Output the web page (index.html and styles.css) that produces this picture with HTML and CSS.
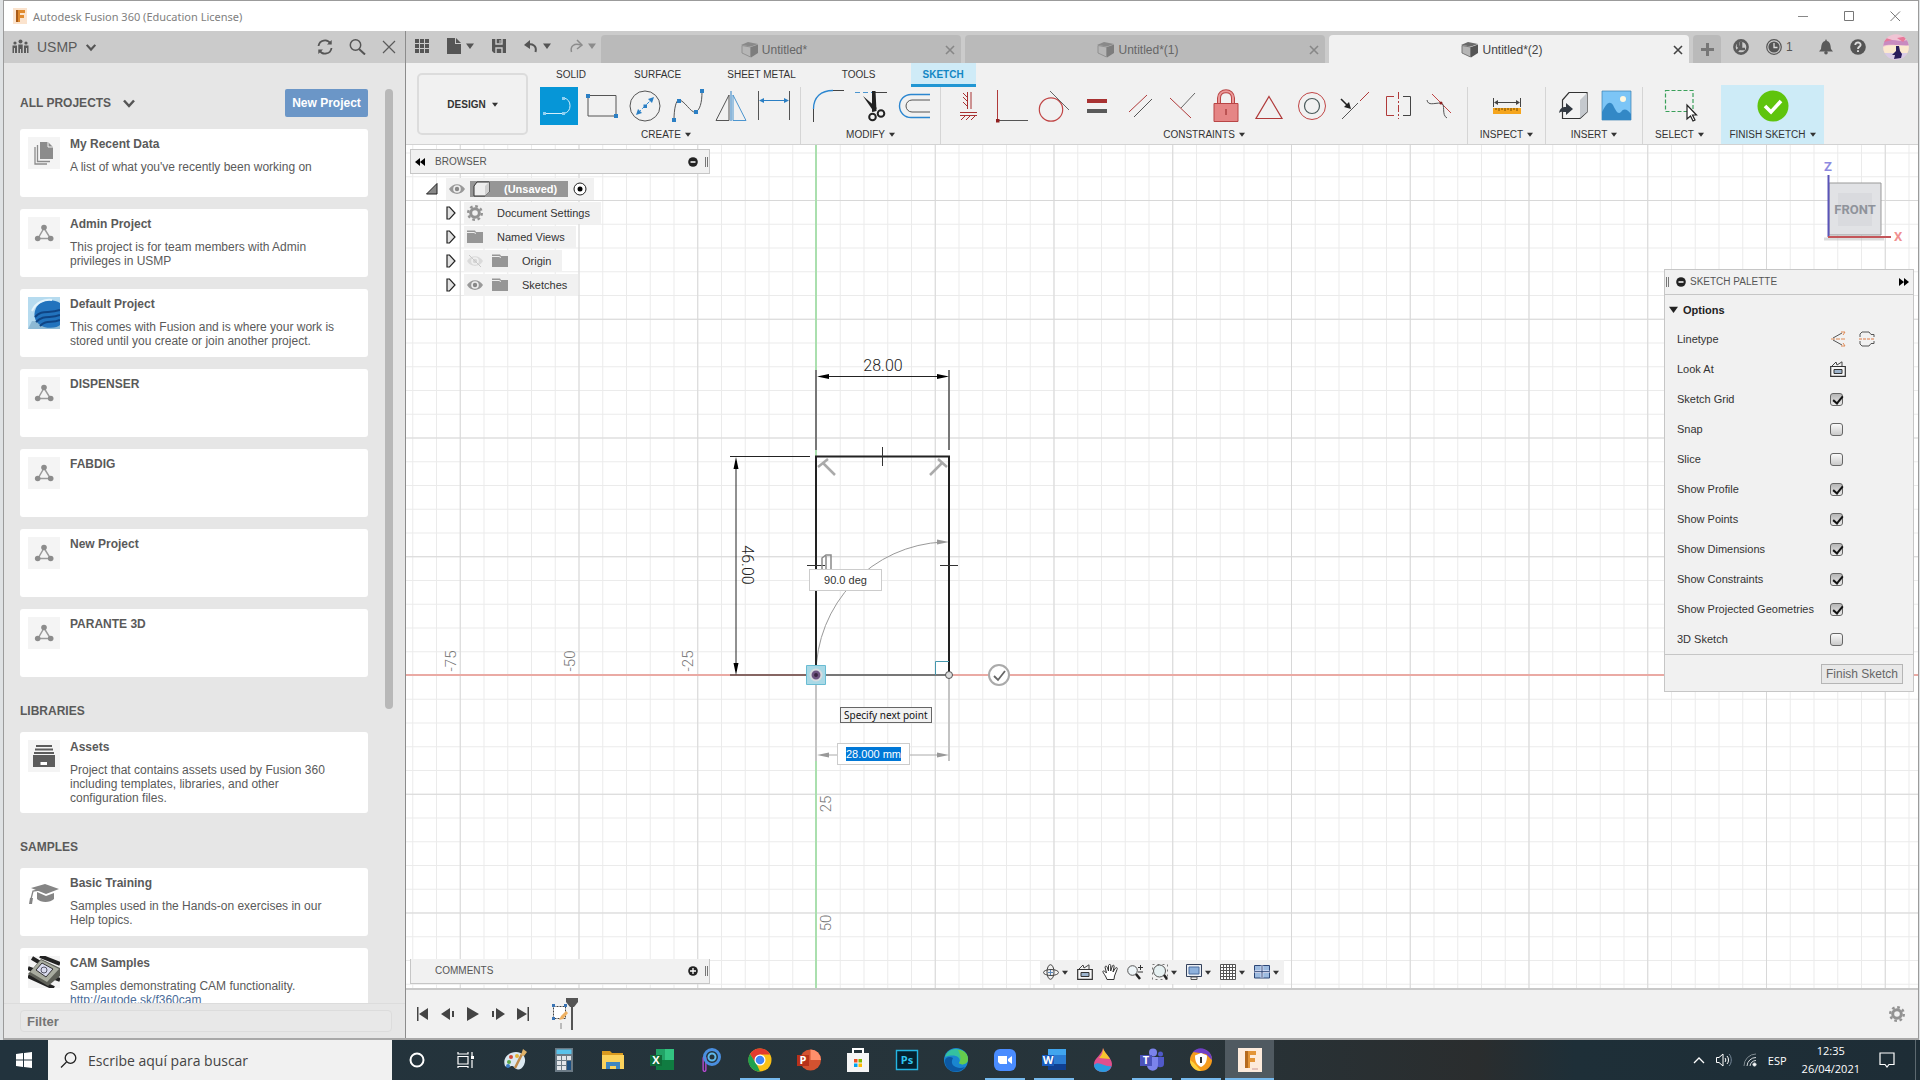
FILE: index.html
```html
<!DOCTYPE html>
<html lang="en">
<head>
<meta charset="utf-8">
<title>Autodesk Fusion 360 (Education License)</title>
<link rel="stylesheet" href="styles.css">
</head>
<body>
<svg class="defs" aria-hidden="true">
  <symbol id="i-project" viewBox="0 0 32 32"><path d="M16 11 10 21.500H22.500Z" fill="none" stroke="#9a9a9a" stroke-width="1.500"/><g fill="#8c8c8c"><circle cx="16" cy="10.500" r="2.800"/><circle cx="9.700" cy="21.500" r="2.800"/><circle cx="22.700" cy="21.500" r="2.800"/></g></symbol>
  <symbol id="i-chev" viewBox="0 0 14 14"><path d="M2 4.500 7 10 12 4.500" fill="none" stroke="#555" stroke-width="2.500"/></symbol>
  <symbol id="i-x" viewBox="0 0 14 14"><path d="M1 1 13 13M13 1 1 13" fill="none" stroke="currentColor" stroke-width="1.200"/></symbol>
  <symbol id="i-xb" viewBox="0 0 10 10"><path d="M1 1 9 9M9 1 1 9" fill="none" stroke="currentColor" stroke-width="1.600"/></symbol>
  <symbol id="i-cube" viewBox="0 0 17 16"><path d="M0 3 7 0 17 2 10 4.500Z" fill="#6a6a6a"/><path d="M1 3.500 9.500 5V15L1 11Z" fill="#b5b5b5" stroke="#777"/><path d="M10 5 17 2.500V11L10 15.500Z" fill="#555"/></symbol>
  <symbol id="i-eye" viewBox="0 0 16 16"><path d="M0 8C4 1.500 12 1.500 16 8 12 14.500 4 14.500 0 8Z" fill="#999"/><circle cx="8" cy="8" r="3.800" fill="#eee"/><circle cx="8" cy="8" r="2.200" fill="#888"/></symbol>
  <symbol id="i-folder" viewBox="0 0 16 16"><path d="M0 1.500H8L9 3H16V14H0Z" fill="#969696"/><path d="M0 3.500H7L9 4.500" stroke="#eee" fill="none"/></symbol>
  <symbol id="i-gear" viewBox="0 0 16 16"><circle cx="8" cy="8" r="4.300" fill="none" stroke="#929292" stroke-width="3"/><circle cx="8" cy="8" r="6.800" fill="none" stroke="#929292" stroke-width="2.400" stroke-dasharray="2.670 2.670"/></symbol>
  <symbol id="i-tri" viewBox="0 0 10 14"><path d="M1 1H3.500L9 7 3.500 13H1Z" fill="#e2e2e2" stroke="#222" stroke-width="1.200"/></symbol>
  <symbol id="i-look" viewBox="0 0 16 16"><path d="M.7 5.500H15.300V15.300H.7Z" fill="#f7f7f7" stroke="#333" stroke-width="1.200"/><path d="M4 8.500H12V12.500H4Z" fill="#9db4cc" stroke="#333"/><path d="M2 5 6 1 7 4 12 .8V5" fill="none" stroke="#444"/></symbol>
  <symbol id="i-caret" viewBox="0 0 8 6"><path d="M0 .5H8L4 6Z" fill="currentColor"/></symbol>
</svg>

<div class="window">
  <header class="titlebar">
    <svg class="app-logo" viewBox="0 0 14 16"><path d="M0 0H14V16H0Z" fill="#fbe3cd"/><path d="M3 2H12V5H7V7H11V10H7V14H3Z" fill="#e08a2e"/><path d="M3 2H5V14H3Z" fill="#a85a17"/></svg>
    <span class="title">Autodesk Fusion 360 (Education License)</span>
    <div class="win-buttons">
      <button aria-label="Minimize"><svg width="11" height="11"><path d="M0 5.500H10" stroke="#888"/></svg></button>
      <button aria-label="Maximize"><svg width="11" height="11"><path d="M.5.5H9.500V9.500H.5Z" fill="none" stroke="#777"/></svg></button>
      <button aria-label="Close"><svg width="11" height="11"><path d="M.5.500 10 10M10 .5.5 10" stroke="#777"/></svg></button>
    </div>
  </header>

  <div class="main">
    <aside class="data-panel">
      <div class="hub">
        <svg width="17" height="16" fill="#5a5a5a"><circle cx="8.500" cy="2.500" r="2"/><circle cx="3" cy="4" r="1.600"/><circle cx="14" cy="4" r="1.600"/><path d="M6.300 5.500H10.700V14H9V10H8V14H6.300ZM.5 6.500H5V14H.5ZM12 6.500H16.500V14H12Z"/><path d="M2.500 9V14M14.500 9V14" stroke="#cbcbcb"/></svg>
        <span class="hub-name">USMP</span>
        <svg width="12" height="12"><use href="#i-chev"/></svg>
        <div class="hub-tools">
          <button aria-label="Refresh"><svg width="16" height="16" fill="none" stroke="#555" stroke-width="1.800"><path d="M1.500 7A6.500 6.500 0 0 1 13.500 4.500M14.500 9A6.500 6.500 0 0 1 2.500 11.500"/><path d="M14.700 1V5.500H10ZM1.300 15V10.500H6Z" fill="#555" stroke="none"/></svg></button>
          <button aria-label="Search"><svg width="17" height="16" fill="none" stroke="#555"><circle cx="6.500" cy="6" r="5.200" stroke-width="1.500"/><path d="M10 10 16 15.500" stroke-width="2"/></svg></button>
          <button aria-label="Close panel"><svg width="14" height="14"><use href="#i-x"/></svg></button>
        </div>
      </div>
      <div class="panel-scroll">
        <div class="projects-head">
          <h2>ALL PROJECTS</h2>
          <svg width="14" height="14"><use href="#i-chev"/></svg>
          <button class="new-project">New Project</button>
        </div>
        <article class="card"><svg class="thumb" viewBox="0 0 32 32"><path d="M12 5H20L25 10V22H12Z" fill="#8c8c8c"/><path d="M20 5V10H25" stroke="#f4f4f4" fill="none"/><path d="M9.500 8V24.500H22M7 10V27H19" fill="none" stroke="#8c8c8c" stroke-width="1.300"/></svg><div><h3>My Recent Data</h3><p>A list of what you've recently been working on</p></div></article>
        <article class="card"><svg class="thumb"><use href="#i-project"/></svg><div><h3>Admin Project</h3><p>This project is for team members with Admin privileges in USMP</p></div></article>
        <article class="card"><svg class="thumb" viewBox="0 0 32 32"><path d="M0 0H32V32H0Z" fill="#b6dbef"/><path d="M0 32 4 24 32 26V32Z" fill="#8db9d4"/><path d="M32 6C24 1 12 3 8 11 4 20 8 27 16 30 24 32 30 30 32 28Z" fill="#2273bd"/><path d="M7 20C14 12 20 17 32 13M8 25C16 17 22 22 32 18M12 29C18 22 24 27 32 23" fill="none" stroke="#0f4484" stroke-width="2"/><path d="M4 14C8 5 17 2 24 3" fill="none" stroke="#e4f4fc" stroke-width="2"/></svg><div><h3>Default Project</h3><p>This comes with Fusion and is where your work is stored until you create or join another project.</p></div></article>
        <article class="card"><svg class="thumb"><use href="#i-project"/></svg><div><h3>DISPENSER</h3></div></article>
        <article class="card"><svg class="thumb"><use href="#i-project"/></svg><div><h3>FABDIG</h3></div></article>
        <article class="card"><svg class="thumb"><use href="#i-project"/></svg><div><h3>New Project</h3></div></article>
        <article class="card"><svg class="thumb"><use href="#i-project"/></svg><div><h3>PARANTE 3D</h3></div></article>
        <h2 class="section">LIBRARIES</h2>
        <article class="card"><svg class="thumb" viewBox="0 0 32 32" fill="#5c5c5c"><path d="M8 5H24V7H8ZM7 8.500H25V10.500H7ZM6 12H26V14H6ZM5 15H27V27H5Z"/><path d="M12.500 22H19V25H12.500Z" fill="#fff"/></svg><div><h3>Assets</h3><p>Project that contains assets used by Fusion 360 including templates, libraries, and other configuration files.</p></div></article>
        <h2 class="section">SAMPLES</h2>
        <article class="card"><svg class="thumb plain" viewBox="0 0 32 32" fill="#858585"><path d="M3 12 17 8 31 13 18 18Z"/><path d="M9 16 18 20 26 17V23C22 27 13 27 9 23Z"/><path d="M17 13 5 15 3 23" fill="none" stroke="#858585" stroke-width="1.300"/><path d="M2 22H5L4 28H1Z"/></svg><div><h3>Basic Training</h3><p>Samples used in the Hands-on exercises in our Help topics.</p></div></article>
        <article class="card"><svg class="thumb" viewBox="0 0 32 32"><path d="M0 12 32 24M0 20 26 32M12 0 32 8M4 2 14 8" stroke="#222" stroke-width="4"/><path d="M0 18 13 3 32 12V20L20 30Z" fill="#5e6058"/><path d="M2 16 13 4 31 13 19 26Z" fill="#a9aca0"/><path d="M8 14 14 7 25 13 18 21Z" fill="#d9dbee" stroke="#333"/><circle cx="16" cy="14" r="3" fill="none" stroke="#556"/></svg><div><h3>CAM Samples</h3><p>Samples demonstrating CAM functionality. <a href="#cam">http://autode.sk/f360cam</a></p></div></article>
        <span class="scroll-thumb"></span>
      </div>
      <div class="filter"><input type="text" placeholder="Filter" aria-label="Filter"></div>
    </aside>

    <section class="workspace">
      <div class="tabbar">
        <div class="quick">
          <button aria-label="Data panel"><svg width="14" height="14" fill="#555"><path d="M0 0H4V4H0ZM5 0H9V4H5ZM10 0H14V4H10ZM0 5H4V9H0ZM5 5H9V9H5ZM10 5H14V9H10ZM0 10H4V14H0ZM5 10H9V14H5ZM10 10H14V14H10Z"/></svg></button>
          <button aria-label="File"><svg width="14" height="16"><path d="M0 0H8V6H14V16H0Z" fill="#555"/><path d="M9 0 14 5H9Z" fill="#555"/></svg><svg class="caret"><use href="#i-caret"/></svg></button>
          <button aria-label="Save"><svg width="14" height="14"><path d="M0 0H14V14H2L0 12Z" fill="#555"/><path d="M4 0V5H10V0M4 14V9H10V14" fill="none" stroke="#ccc" stroke-width="1.400"/><path d="M8 1V4" stroke="#ccc"/></svg></button>
          <button aria-label="Undo"><svg width="14" height="14"><path d="M2 6C9 4 13 7 11.500 13" fill="none" stroke="#555" stroke-width="2"/><path d="M0 6 6 1V10Z" fill="#555"/></svg><svg class="caret"><use href="#i-caret"/></svg></button>
          <button aria-label="Redo" class="off"><svg width="14" height="14"><path d="M12 6C5 4 1 7 2.500 13" fill="none" stroke="#8c8c8c" stroke-width="1.500"/><path d="M8 1 13 6 8 10" fill="none" stroke="#8c8c8c" stroke-width="1.500"/></svg><svg class="caret"><use href="#i-caret"/></svg></button>
        </div>
        <div class="doc-tab dim"><span class="doc-name"><svg width="17" height="16"><use href="#i-cube"/></svg>Untitled*</span><button aria-label="Close tab"><svg width="10" height="10"><use href="#i-xb"/></svg></button></div>
        <div class="doc-tab dim"><span class="doc-name"><svg width="17" height="16"><use href="#i-cube"/></svg>Untitled*(1)</span><button aria-label="Close tab"><svg width="10" height="10"><use href="#i-xb"/></svg></button></div>
        <div class="doc-tab active"><span class="doc-name"><svg width="17" height="16"><use href="#i-cube"/></svg>Untitled*(2)</span><button aria-label="Close tab"><svg width="10" height="10"><use href="#i-xb"/></svg></button></div>
        <button class="add-tab" aria-label="New tab"><svg width="13" height="13"><path d="M6.500 0V13M0 6.500H13" stroke="#777" stroke-width="3"/></svg></button>
        <div class="status">
          <button aria-label="Extensions"><svg width="16" height="16" fill="none"><circle cx="8" cy="8" r="6.600" stroke="#5c5c5c" stroke-width="2.600"/><path d="M5 3V7L8 10H12M3 13 8 8 8 3" stroke="#5c5c5c" stroke-width="2.600"/></svg></button>
          <button aria-label="Job status"><svg width="16" height="16"><circle cx="8" cy="8" r="7.300" fill="none" stroke="#555" stroke-width="1.200"/><circle cx="8" cy="8" r="5.600" fill="#555"/><path d="M8 4V8.500H11.500" fill="none" stroke="#ddd" stroke-width="1.300"/></svg><span>1</span></button>
          <button class="bell" aria-label="Notifications"><svg width="14" height="16" fill="#5a5a5a"><path d="M7 0 8 2C12 3 11.500 8 12 10L14 12.500H0L2 10C2.500 8 2 3 6 2Z"/><circle cx="7" cy="13.700" r="1.800"/></svg></button>
          <button aria-label="Help"><svg width="16" height="16"><circle cx="8" cy="8" r="7.800" fill="#555"/><path d="M5.300 6C5.300 2.500 10.800 2.700 10.600 6 10.500 7.800 8 7.500 8 10M8 11.300V13" fill="none" stroke="#ddd" stroke-width="1.900"/></svg></button>
          <button aria-label="Account"><svg width="26" height="26" viewBox="0 0 26 26"><clipPath id="av"><circle cx="13" cy="13" r="12.800"/></clipPath><g clip-path="url(#av)"><path d="M0 0H26V26H0Z" fill="#f0c4d4"/><path d="M0 7C8 3 18 10 26 5V11C18 13 8 9 0 12Z" fill="#c98bc0"/><path d="M0 3 9 6 1 8ZM14 4 25 2 20 8Z" fill="#e8799a"/><path d="M0 13C8 10 18 12 26 12V19H0Z" fill="#fbe9cf"/><path d="M0 19H26V26H0Z" fill="#d8cbe6"/><path d="M13 12 16 12 17 17 19 20 18 24 11 25 12 21 9 21 13 17Z" fill="#2a1c5c"/></g></svg></button>
        </div>
      </div>

      <div class="ribbon">
        <button class="design">DESIGN<svg class="caret"><use href="#i-caret"/></svg></button>
        <div class="ribbon-body">
          <nav class="ribbon-tabs"><a href="#solid">SOLID</a><a href="#surface">SURFACE</a><a href="#sheet">SHEET METAL</a><a href="#tools">TOOLS</a><a href="#sketch" class="current">SKETCH</a></nav>
          <div class="groups">
            <div class="group">
              <div class="tools">
                <button class="on" aria-label="Line"><svg viewBox="0 0 38 38"><path d="M4 26.500H24M24 11A8 8 0 0 1 24 26.500" fill="none" stroke="#d5eefa"/><g fill="#8fd0f2"><path d="M3 25H6V28H3ZM22 25H25V28H22ZM22 10H25V13H22Z"/></g></svg></button>
                <button aria-label="Rectangle"><svg viewBox="0 0 38 38"><path d="M5 8.500H33V29H5Z" fill="none" stroke="#555"/><path d="M3 7H7V11H3ZM31 27H35V31H31Z" fill="#2b7fc4"/></svg></button>
                <button aria-label="Circle"><svg viewBox="0 0 38 38"><circle cx="19" cy="19" r="15" fill="none" stroke="#555"/><path d="M12 26 26 12" stroke="#2b86d0" stroke-dasharray="4 2"/><path d="M10 28 12 22 16 26ZM28 10 22 12 26 16ZM17.500 17.500H21V21H17.500Z" fill="#2b7fc4"/></svg></button>
                <button aria-label="Spline"><svg viewBox="0 0 38 38"><path d="M5 33C5 22 7 13 10 13 15 13 22 26 26 25 31 24 33 15 33 5" fill="none" stroke="#555"/><path d="M3 31H7V35H3ZM8 12H12V16H8ZM25 23H29V27H25ZM31 2H35V6H31Z" fill="#2b7fc4"/></svg></button>
                <button aria-label="Mirror"><svg viewBox="0 0 38 38"><path d="M17 8V33.500H4Z" fill="none" stroke="#555"/><path d="M21 8V33.500H34Z" fill="none" stroke="#4b95cf"/><path d="M19 4V34" stroke="#2b7fc4"/></svg></button>
                <button aria-label="Dimension"><svg viewBox="0 0 38 38"><path d="M3.500 4V33M34.500 4V33" stroke="#555"/><path d="M5 13.500H33" stroke="#2b7fc4"/><path d="M4 13.500 9 11V16ZM34 13.500 29 11V16Z" fill="#2b7fc4"/></svg></button>
              </div>
              <button class="group-label">CREATE<svg class="caret"><use href="#i-caret"/></svg></button>
            </div>
            <div class="group">
              <div class="tools">
                <button aria-label="Fillet"><svg viewBox="0 0 38 38" fill="none"><path d="M4.500 22V35M24 3.500H35" stroke="#444"/><path d="M4.500 22C4.500 10 12 3.500 24 3.500" stroke="#2b86d0" stroke-width="1.300"/></svg></button>
                <button aria-label="Trim"><svg viewBox="0 0 38 38"><path d="M3 5.500H20" stroke="#4b95cf" stroke-dasharray="5 3"/><path d="M22 5.500H35" stroke="#444"/><path d="M20 4H23.500L24.500 24 20 25ZM11 9 25 21 22 25Z" fill="#222"/><g fill="none" stroke="#222" stroke-width="2"><circle cx="20.500" cy="30" r="3.300"/><circle cx="29" cy="26.500" r="3.300"/></g></svg></button>
                <button aria-label="Offset"><svg viewBox="0 0 38 38" fill="none"><path d="M35 7.500H16A11.500 11.500 0 0 0 16 30.500H35" stroke="#2b86d0" stroke-width="1.400"/><path d="M35 13H17A6 6 0 0 0 17 25H35" stroke="#555"/></svg></button>
              </div>
              <button class="group-label">MODIFY<svg class="caret"><use href="#i-caret"/></svg></button>
            </div>
            <div class="group">
              <div class="tools">
                <button aria-label="Horizontal/Vertical"><svg viewBox="0 0 38 38" fill="none" stroke="#a83232"><path d="M18.500 5V22M11 25.500H28M14 6 18 10M14 10 18 14M14 15 18 19"/><path d="M22 5V22M11 28.500H28M16 29 12 33M21 29 17 33M26 29 22 33"/></svg></button>
                <button aria-label="Coincident"><svg viewBox="0 0 38 38"><path d="M5.500 3V33" stroke="#b03a3a"/><path d="M6 33.500H36" stroke="#555"/><path d="M4 32H7.500V35.500H4Z" fill="#902020"/></svg></button>
                <button aria-label="Tangent"><svg viewBox="0 0 38 38" fill="none"><circle cx="16" cy="22.500" r="11.700" stroke="#c04545" stroke-width="1.200"/><path d="M15 4 34 23" stroke="#666"/></svg></button>
                <button aria-label="Equal"><svg viewBox="0 0 38 38"><path d="M9 12H29V16H9Z" fill="#a83232"/><path d="M9 22H29V26H9Z" fill="#5a5a5a"/></svg></button>
                <button aria-label="Parallel"><svg viewBox="0 0 38 38"><path d="M8 25 26 8" stroke="#b03a3a"/><path d="M13 30 31 12" stroke="#555"/></svg></button>
                <button aria-label="Perpendicular"><svg viewBox="0 0 38 38"><path d="M6 11 27 31" stroke="#b03a3a"/><path d="M17 21 31 6" stroke="#666"/></svg></button>
                <button aria-label="Fix"><svg viewBox="0 0 38 38"><path d="M12 17V11C12 2 26 2 26 11V17" fill="none" stroke="#b84545" stroke-width="4"/><path d="M12 17V11C12 2 26 2 26 11V17" fill="none" stroke="#ec9a9a" stroke-width="2"/><path d="M7 16.500H31V34.500H7Z" fill="#e58585" stroke="#b84545"/><path d="M19 22V28" stroke="#902020"/></svg></button>
                <button aria-label="Midpoint"><svg viewBox="0 0 38 38"><path d="M19 9.500 32 31.500H6Z" fill="none" stroke="#b03a3a" stroke-width="1.200"/></svg></button>
                <button aria-label="Concentric"><svg viewBox="0 0 38 38" fill="none"><circle cx="19" cy="19" r="13.500" stroke="#c04545"/><circle cx="19" cy="19" r="7.500" stroke="#4a5a5a" stroke-width="1.200"/></svg></button>
                <button aria-label="Collinear"><svg viewBox="0 0 38 38"><path d="M6 32 22 16" stroke="#555"/><path d="M24 14 33 5" stroke="#b03a3a"/><path d="M5 12 13 20" stroke="#222" stroke-width="1.600"/><path d="M15 22 8 20 13 15Z" fill="#222"/></svg></button>
                <button aria-label="Symmetry"><svg viewBox="0 0 38 38" fill="none"><path d="M15 9.500H7.500V28.500H15" stroke="#b03a3a"/><path d="M19.500 5V32" stroke="#b03a3a" stroke-dasharray="7 2 2 2"/><path d="M24 9.500H31.500V28.500H24" stroke="#444"/></svg></button>
                <button aria-label="Curvature"><svg viewBox="0 0 38 38" fill="none"><path d="M10 7 29 26" stroke="#c04545"/><path d="M5 13C6 19 12 16 19 16 24 17 19 28 25 31" stroke="#555"/><circle cx="19" cy="16" r="1.500" fill="#902020"/></svg></button>
              </div>
              <button class="group-label">CONSTRAINTS<svg class="caret"><use href="#i-caret"/></svg></button>
            </div>
            <div class="group">
              <div class="tools wide">
                <button aria-label="Measure"><svg viewBox="0 0 38 38"><path d="M5.500 11V20M32.500 11V20M7 15.500H31" stroke="#444"/><path d="M6 15.500 10 13V18ZM32 15.500 28 13V18Z" fill="#444"/><path d="M5 21H33V27H5Z" fill="#f5a51d"/><path d="M8 21V23M11 21V24M14 21V23M17 21V24M20 21V23M23 21V24M26 21V23M29 21V24" stroke="#754a00"/></svg></button>
              </div>
              <button class="group-label">INSPECT<svg class="caret"><use href="#i-caret"/></svg></button>
            </div>
            <div class="group">
              <div class="tools">
                <button aria-label="Insert derive"><svg viewBox="0 0 38 38"><path d="M8.500 13 15 5.500H33V25L26 31.500H8.500Z" fill="#f3f3f3" stroke="#333" stroke-width="1.200"/><path d="M26 31 26 13 33 6V25Z" fill="#c5c9ce"/><path d="M5 26C6 20 10 20 12 20V16L19 22 12 28V25C9 25 7 24 5 26Z" fill="#333a42"/></svg></button>
                <button aria-label="Insert canvas"><svg viewBox="0 0 38 38"><path d="M5 4H34V33H5Z" fill="#7cc5f6" stroke="#3a7eb0" stroke-width=".7"/><circle cx="26" cy="12" r="3" fill="#fff8e0"/><path d="M5 25C8 19 12 12 16 18 19 24 21 28 24 25 27 20 31 23 34 27V33H5Z" fill="#3388c6"/></svg></button>
              </div>
              <button class="group-label">INSERT<svg class="caret"><use href="#i-caret"/></svg></button>
            </div>
            <div class="group last">
              <div class="tools wide">
                <button aria-label="Select"><svg viewBox="0 0 38 38"><path d="M4.500 3.500H32V24.500H4.500Z" fill="none" stroke="#3aa05a" stroke-width="1.200" stroke-dasharray="4 2"/><path d="M26 18V32L29.500 29 32 34 34 33 31.500 28H35.500Z" fill="#fff" stroke="#222" stroke-width="1.200"/></svg></button>
              </div>
              <button class="group-label">SELECT<svg class="caret"><use href="#i-caret"/></svg></button>
            </div>
            <div class="group finish">
              <div class="tools wide">
                <button aria-label="Finish"><svg viewBox="0 0 38 38"><circle cx="19" cy="19" r="15.500" fill="#5fc40d"/><path d="M11 19 17 25 27 14" fill="none" stroke="#fff" stroke-width="3.600"/></svg></button>
              </div>
              <button class="group-label">FINISH SKETCH<svg class="caret"><use href="#i-caret"/></svg></button>
            </div>
          </div>
        </div>
      </div>

      <div class="canvas">
        <svg class="drawing" width="100%" height="100%">
          <defs>
            <pattern id="minor" width="5" height="5" patternUnits="userSpaceOnUse" patternTransform="translate(410 530) scale(4.750)"><path d="M0 0H5M0 0V5" stroke="#ebebeb" stroke-width=".42"/></pattern>
            <pattern id="major" width="25" height="25" patternUnits="userSpaceOnUse" patternTransform="translate(410 530) scale(4.750)"><path d="M0 0H25M0 0V25" stroke="#d8d8d8" stroke-width=".42"/></pattern>
          </defs>
          <rect width="100%" height="100%" fill="url(#minor)"/>
          <rect width="100%" height="100%" fill="url(#major)"/>
          <path d="M410 0V2000" stroke="#aadfae" stroke-width="2"/>
          <path d="M0 530H4000" stroke="#eaaaa4" stroke-width="2"/>
          <g class="ruler-text" text-anchor="middle">
            <text transform="translate(50 516) rotate(-90)">-75</text>
            <text transform="translate(169 516) rotate(-90)">-50</text>
            <text transform="translate(287 516) rotate(-90)">-25</text>
            <text transform="translate(425 659) rotate(-90)">25</text>
            <text transform="translate(425 778) rotate(-90)">50</text>
          </g>
          <path d="M410 532V616M543 532V616" stroke="#c4c4c4" stroke-width="2"/>
          <path d="M422 610H531" stroke="#aaa"/>
          <path d="M411 610 423 607.500V612.500ZM543 610 531 607.500V612.500Z" fill="#999"/>
          <path d="M410 530A133 133 0 0 1 537 397" fill="none" stroke="#999"/>
          <path d="M543 397 531 394.500V399.500Z" fill="#999"/>
          <path d="M324 311.500H404M324 530H404" stroke="#222"/>
          <path d="M404 530H543" stroke="#777" stroke-width="2"/>
          <path d="M410 225V305M543 225V305" stroke="#777" stroke-width="2"/>
          <path d="M416 231.500H538M330 316V526" stroke="#222"/>
          <path d="M411 231.500 423 229V234ZM543 231.500 531 229V234ZM330 312 327.500 324H332.500ZM330 530 327.500 518H332.500Z"/>
          <path d="M410 530V311.500H543V530" fill="none" stroke="#222" stroke-width="2"/>
          <path d="M476.500 302V321M401 420.500H419M534 420.500H552" stroke="#333"/>
          <g stroke="#aaa" stroke-width="2.500"><path d="M412 322 422 314M417 318 429 330M532 314 541 322M536 318 524 330"/></g>
          <path d="M416 424V413L420 410H425V424M420 411V424" fill="none" stroke="#8a8a8a" stroke-width="1.500"/>
          <path d="M529.500 530V516.500H543" fill="none" stroke="#4597ad"/>
          <path d="M400.500 520.500H419.500V539.500H400.500Z" fill="#a9d9e6" stroke="#69bcd3"/>
          <circle cx="410" cy="530" r="6.500" fill="#d6dcdf"/><circle cx="410" cy="530" r="3.200" fill="#3a2640" stroke="#6f5580" stroke-width="2.500"/>
          <circle cx="543" cy="530" r="3.500" fill="#ddd" stroke="#555"/>
          <circle cx="593" cy="530" r="10" fill="#fff" stroke="#aaa" stroke-width="2"/><path d="M588 531 592 535 599 526" fill="none" stroke="#666" stroke-width="1.800"/>
          <text class="dim-text" x="477" y="226" text-anchor="middle">28.00</text>
          <text class="dim-text" text-anchor="middle" transform="translate(336 420) rotate(90)">46.00</text>
        </svg>
        <input class="field angle" aria-label="Angle" value="90.0 deg">
        <span class="hint">Specify next point</span>
        <label class="field length"><mark>28.000 mm</mark></label>

        <section class="browser">
          <header class="palette-bar"><svg width="10" height="8"><path d="M5 0V8L0 4ZM10 0V8L5 4Z"/></svg><h2>BROWSER</h2><button aria-label="Collapse"><svg width="10" height="10"><circle cx="5" cy="5" r="4.800" fill="#222"/><path d="M2.500 5H7.500" stroke="#fff" stroke-width="1.500"/></svg></button><i class="grip"></i></header>
          <ul class="tree">
            <li class="root"><svg width="12" height="12"><path d="M.5 11H11V.5Z" fill="#888" stroke="#222"/></svg><span class="node"><svg width="16" height="16"><use href="#i-eye"/></svg><b class="selected"><svg width="17" height="16"><path d="M1 5 4 1H16V11L12 15H1Z" fill="#eee" stroke="#333"/><path d="M12 15V5L16 1V11Z" fill="#d0d0d0"/></svg>(Unsaved)</b><svg width="14" height="14"><circle cx="7" cy="7" r="6" fill="#fff" stroke="#222"/><circle cx="7" cy="7" r="2.500"/></svg></span></li>
            <li><svg width="10" height="14"><use href="#i-tri"/></svg><span class="node"><svg width="16" height="16"><use href="#i-gear"/></svg><em>Document Settings</em></span></li>
            <li><svg width="10" height="14"><use href="#i-tri"/></svg><span class="node"><svg width="16" height="16"><use href="#i-folder"/></svg><em>Named Views</em></span></li>
            <li><svg width="10" height="14"><use href="#i-tri"/></svg><span class="node"><svg width="16" height="16"><g opacity=".25"><use href="#i-eye"/></g><path d="M2 2 14 14" stroke="#c8c8c8"/></svg><svg width="16" height="16"><use href="#i-folder"/></svg><em>Origin</em></span></li>
            <li><svg width="10" height="14"><use href="#i-tri"/></svg><span class="node"><svg width="16" height="16"><use href="#i-eye"/></svg><svg width="16" height="16"><use href="#i-folder"/></svg><em>Sketches</em></span></li>
          </ul>
        </section>

        <div class="viewcube">
          <svg width="90" height="90"><path d="M11 17H63V69H11Z" fill="#e1e2e5" stroke="#999"/><path d="M20 27H54V60H20Z" fill="#d9dade"/><path d="M6 73H66" stroke="#bbb" stroke-width="3" opacity=".5"/><path d="M10.500 9V71" stroke="#5a54b8" stroke-width="2"/><path d="M10 71H73" stroke="#c4565a" stroke-width="2"/><text class="axis z" x="6" y="5">Z</text><text class="axis x" x="76" y="75">X</text><text class="face" x="37" y="48" text-anchor="middle">FRONT</text></svg>
        </div>

        <section class="palette">
          <header class="palette-bar"><i class="grip"></i><button aria-label="Collapse"><svg width="10" height="10"><circle cx="5" cy="5" r="4.800" fill="#222"/><path d="M2.500 5H7.500" stroke="#fff" stroke-width="1.500"/></svg></button><h2>SKETCH PALETTE</h2><svg width="10" height="8"><path d="M0 0V8L5 4ZM5 0V8L10 4Z"/></svg></header>
          <h3><svg class="caret"><use href="#i-caret"/></svg>Options</h3>
          <div class="option"><span>Linetype</span><div class="pair">
            <button aria-label="Construction"><svg width="16" height="16" fill="none"><path d="M1 8H16" stroke="#e08a55" stroke-dasharray="4 1"/><path d="M3 7 12 2M3 9 12 14" stroke="#555"/><path d="M11 1 15 1 13 4M11 15 15 15 13 12" stroke="#e08a55"/></svg></button>
            <button aria-label="Centerline"><svg width="16" height="16" fill="none"><path d="M1 6V3L3 1H10L12 3.500H15V6M1 10V13L3 15H10L12 12.500H15V10" stroke="#555"/><path d="M0 8H16" stroke="#e07a45" stroke-dasharray="3 1"/></svg></button></div></div>
          <div class="option"><span>Look At</span><button aria-label="Look At"><svg width="16" height="16"><use href="#i-look"/></svg></button></div>
          <label class="option"><span>Sketch Grid</span><input type="checkbox" checked></label>
          <label class="option"><span>Snap</span><input type="checkbox"></label>
          <label class="option"><span>Slice</span><input type="checkbox"></label>
          <label class="option"><span>Show Profile</span><input type="checkbox" checked></label>
          <label class="option"><span>Show Points</span><input type="checkbox" checked></label>
          <label class="option"><span>Show Dimensions</span><input type="checkbox" checked></label>
          <label class="option"><span>Show Constraints</span><input type="checkbox" checked></label>
          <label class="option"><span>Show Projected Geometries</span><input type="checkbox" checked></label>
          <label class="option"><span>3D Sketch</span><input type="checkbox"></label>
          <footer><button>Finish Sketch</button></footer>
        </section>

        <section class="comments palette-bar"><h2>COMMENTS</h2><button aria-label="Expand"><svg width="10" height="10"><circle cx="5" cy="5" r="4.800" fill="#222"/><path d="M2 5H8M5 2V8" stroke="#fff" stroke-width="1.300"/></svg></button><i class="grip"></i></section>

        <div class="navbar">
          <button aria-label="Orbit"><svg width="16" height="16" fill="none" stroke="#444"><ellipse cx="7.500" cy="8" rx="3.500" ry="7.300"/><ellipse cx="8" cy="8.500" rx="7.500" ry="3"/><path d="M7.500 6V11M5 8.500H10" stroke="#5b86b8"/></svg><svg class="caret"><use href="#i-caret"/></svg></button>
          <button aria-label="Look At"><svg width="16" height="16"><use href="#i-look"/></svg></button>
          <button aria-label="Pan"><svg width="16" height="16"><path d="M5 15.500C4 12 1 9 .8 7.500 1.500 6 3.500 8 4.500 9L3 3C3.500 1.500 5 2 5.500 4L6.500 7V1.500C7 0 8.500 0 8.700 1.500V7L10.500 1.700C11.500.7 12.700 1.500 12 3L11 8 13.500 4C15 3 15.700 4 15 5.500L12.500 12 12 15.500Z" fill="#fff" stroke="#333"/></svg></button>
          <button aria-label="Zoom"><svg width="16" height="16" fill="none"><circle cx="5.500" cy="6.500" r="4.800" stroke="#555" fill="#eef5f8"/><path d="M9 10 13 15" stroke="#222" stroke-width="2.500"/><path d="M11 3.500H16M13.500 1V6M11 8H16" stroke="#333"/></svg></button>
          <button aria-label="Zoom window"><svg width="16" height="16" fill="none"><path d="M.5.5H15.500V15.500H.5Z" stroke="#777" stroke-dasharray="2 3"/><circle cx="7.500" cy="7" r="6" stroke="#555" fill="#e6f1f2"/><path d="M12 11 15 15" stroke="#222" stroke-width="2.500"/></svg><svg class="caret"><use href="#i-caret"/></svg></button>
          <button aria-label="Display settings"><svg width="16" height="16"><path d="M.5.5H15.500V12.500H.5Z" fill="#e9eef4" stroke="#33405a"/><path d="M3 3H13V10H3Z" fill="#8db1dc" stroke="#4c6ea0"/><path d="M5 13H11V15.500H5Z" fill="#eee" stroke="#555"/></svg><svg class="caret"><use href="#i-caret"/></svg></button>
          <button aria-label="Grid"><svg width="16" height="16"><path d="M.5.500H15.500V15.500H.5ZM.5 3.500H15.500M.5 6.500H15.500M.5 9.500H15.500M.5 12.500H15.500M3.500.5V15.500M6.500.5V15.500M9.500.5V15.500M12.500.5V15.500" fill="#fff" stroke="#555"/></svg><svg class="caret"><use href="#i-caret"/></svg></button>
          <button aria-label="Viewports"><svg width="16" height="14"><path d="M.5.5H15.500V13H.5Z" fill="#9dbbe0" stroke="#2c4676"/><path d="M8 .5V13M.5 6.700H15.500" stroke="#eef" stroke-width="2.500"/><path d="M8 .5V13M.5 6.700H15.500" stroke="#2c4676"/></svg><svg class="caret"><use href="#i-caret"/></svg></button>
        </div>
      </div>

      <footer class="timeline">
        <button aria-label="Start"><svg width="14" height="14" fill="#444"><path d="M1 0H2.500V14H1ZM12 1V13L3 7Z"/></svg></button>
        <button aria-label="Step back"><svg width="14" height="14" fill="#444"><path d="M9 1V13L0 7ZM11 4H13V10H11Z"/></svg></button>
        <button aria-label="Play"><svg width="14" height="14" fill="#444"><path d="M1 0 13 7 1 14Z"/></svg></button>
        <button aria-label="Step forward"><svg width="14" height="14" fill="#444"><path d="M5 1V13L14 7ZM1 4H3V10H1Z"/></svg></button>
        <button aria-label="End"><svg width="14" height="14" fill="#444"><path d="M11.500 0H13V14H11.500ZM1 1V13L11 7Z"/></svg></button>
        <svg class="marker" width="28" height="34"><path d="M3.500 9.500H15.500V21.500H3.500Z" fill="#fff" stroke="#444" stroke-dasharray="2 1"/><path d="M2 7H5V10H2ZM14 7H17V10H14ZM2 20H5V23H2Z" fill="#3a74b5"/><path d="M9 23 11 19 16 14 18 16 13 22Z" fill="#eeb062"/><path d="M11 26V32" stroke="#bbb" stroke-width="2"/><path d="M16 1H28V5L24 10H20L16 5Z" fill="#555"/><path d="M22 8V33" stroke="#555" stroke-width="2"/></svg>
        <button class="gear" aria-label="Settings"><svg width="16" height="16"><use href="#i-gear"/></svg></button>
      </footer>
    </section>
  </div>
</div>

<footer class="taskbar">
  <button class="start" aria-label="Start"><svg width="16" height="16" fill="#fff"><path d="M0 2 7 1V7.500H0ZM8 1 16 0V7.500H8ZM0 8.500H7V15L0 14ZM8 8.500H16V16L8 15Z"/></svg></button>
  <label class="search"><svg width="17" height="16" fill="none" stroke="#222" stroke-width="1.300"><circle cx="10.500" cy="6" r="5.300"/><path d="M6.500 10 1 15.500"/></svg><input type="text" placeholder="Escribe aquí para buscar" aria-label="Escribe aquí para buscar"></label>
  <nav class="apps">
    <button aria-label="Cortana"><svg viewBox="0 0 24 24"><circle cx="12" cy="12" r="6.500" fill="none" stroke="#fff" stroke-width="2"/></svg></button>
    <button aria-label="Task view"><svg viewBox="0 0 24 24" fill="none" stroke="#fff" stroke-width="1.200"><path d="M4 8.500H14V16H4ZM4 4V6H14V4M4 20V18.500H14V20M18 4V8M18 12V20"/><path d="M17 8H20V11H17Z" fill="#fff" stroke="none"/></svg></button>
    <button aria-label="Paint"><svg viewBox="0 0 24 24"><path d="M2 18C-1 10 6 4 13 4 21 4 24 11 21 17 18 23 13 22 11 19 9 16 5 21 2 18Z" fill="#dbe8f0"/><circle cx="6" cy="14" r="2" fill="#5aa54a"/><circle cx="8" cy="9" r="2" fill="#d04a3a"/><circle cx="14" cy="8" r="2" fill="#e2b53a"/><circle cx="5" cy="18" r="2" fill="#3a7ac0"/><path d="M12 20 19 6" stroke="#c08a4a" stroke-width="2.500"/><path d="M18 7 20 1 24 4 21 8Z" fill="#e0b268"/></svg></button>
    <button aria-label="Calculator"><svg viewBox="0 0 24 24"><path d="M3 0H21V24H3Z" fill="#6b7a85"/><path d="M4.500 1.500H19.500V6H4.500Z" fill="#59c2ea"/><path d="M5 8H9V12H5ZM10 8H14V12H10ZM15 8H19V12H15ZM5 13H9V17H5ZM10 13H14V17H10ZM5 18H9V22H5ZM10 18H14V22H10Z" fill="#e2e6ea"/><path d="M15 13H19V22H15Z" fill="#1d4f80"/></svg></button>
    <button aria-label="Explorer"><svg viewBox="0 0 24 24"><path d="M1 3H9L11 5H22V8H1Z" fill="#d99a1f"/><path d="M1 7H23V21H1Z" fill="#fbd25c"/><path d="M5 21V14H19V21H15V18H9V21Z" fill="#3f86c0"/></svg></button>
    <button aria-label="Excel"><svg viewBox="0 0 24 24"><path d="M6 1H24V22H6Z" fill="#21a366"/><path d="M15 1H24V12H15Z" fill="#33c481"/><path d="M6 12H24V22H6Z" fill="#107c41"/><path d="M0 7H12V18H0Z" fill="#0f6b38"/><text class="glyph" x="6" y="16">X</text></svg></button>
    <button aria-label="PicsArt"><svg viewBox="0 0 24 24" fill="none"><path d="M5.500 22V10" stroke="#c44be0" stroke-width="4" stroke-linecap="round"/><path d="M5.500 22V10" stroke="#24333b" stroke-width="1.500" stroke-linecap="round"/><circle cx="13" cy="9" r="7.500" stroke="#4a8fe0" stroke-width="3"/><circle cx="13" cy="9" r="3.500" stroke="#5fb8ea" stroke-width="2"/></svg></button>
    <button aria-label="Chrome" class="run"><svg viewBox="0 0 24 24"><circle cx="12" cy="12" r="11.500" fill="#fbc116"/><path d="M2 6A11.500 11.500 0 0 1 22 6.500H12L7 14Z" fill="#e33b2e"/><path d="M2 6 9 17 12 23.500A11.500 11.500 0 0 1 2 6Z" fill="#1fa14d"/><circle cx="12" cy="12" r="5.500" fill="#fff"/><circle cx="12" cy="12" r="4.300" fill="#4285f4"/></svg></button>
    <button aria-label="PowerPoint"><svg viewBox="0 0 24 24"><circle cx="13.500" cy="12" r="10.500" fill="#d35230"/><path d="M13.500 1.500A10.500 10.500 0 0 1 24 12H13.500Z" fill="#ff8f6b"/><path d="M0 7H12V18H0Z" fill="#b7311a"/><text class="glyph" x="6" y="16">P</text></svg></button>
    <button aria-label="Store"><svg viewBox="0 0 24 24"><path d="M7 6V1H17V6" fill="none" stroke="#fff" stroke-width="2"/><path d="M1 5H23V24H1Z" fill="#f5f5f5"/><path d="M8 11H11.500V14.500H8Z" fill="#f25022"/><path d="M12.500 11H16V14.500H12.500Z" fill="#7fba00"/><path d="M8 15.500H11.500V19H8Z" fill="#00a4ef"/><path d="M12.500 15.500H16V19H12.500Z" fill="#ffb900"/></svg></button>
    <button aria-label="Photoshop"><svg viewBox="0 0 24 24"><path d="M1.500 2.500H22.500V21.500H1.500Z" fill="#04202e" stroke="#24b5e2" stroke-width="1.400"/><text class="glyph ps" x="12" y="16">Ps</text></svg></button>
    <button aria-label="Edge"><svg viewBox="0 0 24 24"><circle cx="12" cy="12" r="12" fill="#1a86d0"/><path d="M1 9C4-3 24-1 24 11 24 16 18 18 15 15 18 10 12 5 1 9Z" fill="#35c1a0"/><path d="M14 2C20 2 24 6 24 11 24 16 18 18 15 15 18 11 16 6 14 2Z" fill="#66cc4c"/><path d="M9 10C5 17 12 22 21 19 15 27 0 24 1 12 2 9 6 8 9 10Z" fill="#0c59a4"/></svg></button>
    <button aria-label="Zoom" class="run"><svg viewBox="0 0 24 24"><rect x="1" y="1" width="22" height="22" rx="6" fill="#4a8cff"/><path d="M5 8H14V16H7L5 14ZM15 11 19 8V16L15 13Z" fill="#fff"/></svg></button>
    <button aria-label="Word" class="run"><svg viewBox="0 0 24 24"><path d="M6 1H24V22H6Z" fill="#2b7cd3"/><path d="M6 1H24V7H6Z" fill="#41a5ee"/><path d="M6 16H24V22H6Z" fill="#103f91"/><path d="M0 7H12V18H0Z" fill="#185abd"/><text class="glyph" x="6" y="16">W</text></svg></button>
    <button aria-label="Paint 3D"><svg viewBox="0 0 24 24"><path d="M12 0C13 5 21 10 21 16 21 21 17 24 12 24S3 21 3 16C3 10 11 7 12 0Z" fill="#e0508e"/><path d="M12 0C13 4 17 7 19 11L8 10C11 7 12 4 12 0Z" fill="#f7c52e"/><path d="M3 17C8 12 14 20 20.500 18 19 22 16 24 12 24 7 24 3 21 3 17Z" fill="#2a9be0"/></svg></button>
    <button aria-label="Teams" class="run"><svg viewBox="0 0 24 24"><circle cx="13" cy="4.500" r="4" fill="#7b83eb"/><circle cx="20.500" cy="6" r="2.500" fill="#5059c9"/><path d="M16 9H24V16C24 20 19 20 17 18Z" fill="#5059c9"/><path d="M7 9H18V17C18 25 7 24 7 17Z" fill="#7b83eb"/><path d="M0 7H12V18H0Z" fill="#4b53bc"/><text class="glyph" x="6" y="16">T</text></svg></button>
    <button aria-label="Secure browser" class="run"><svg viewBox="0 0 24 24"><circle cx="12" cy="12" r="11" fill="#f59b1c"/><path d="M4 4A11 11 0 0 1 23 12L17 6Z" fill="#6e3fc7"/><path d="M1 12A11 11 0 0 0 12 23L5 15Z" fill="#fcd23d"/><path d="M12 5 18 7.500C18 14 16 17 12 19 8 17 6 14 6 7.500Z" fill="#fff"/><path d="M12 9V15" stroke="#333" stroke-width="2"/></svg></button>
    <button aria-label="Fusion 360" class="run current"><svg viewBox="0 0 24 24"><path d="M0 0H24V24H0Z" fill="#fdebdc"/><path d="M7 3H18V7H12V10H17V14H12V20H7Z" fill="#e39538"/><path d="M7 3H10V20H7Z" fill="#b56a1e"/><path d="M14 21H20" stroke="#c99"/></svg></button>
  </nav>
  <div class="tray">
    <svg width="12" height="8" fill="none" stroke="#fff" stroke-width="1.300"><path d="M1 7 6 2 11 7"/></svg>
    <svg width="16" height="14" fill="none" stroke="#fff"><path d="M.5 4.500H3L7 1V13L3 9.500H.5Z"/><path d="M9 5C10 6 10 8 9 9M11 3C13 5 13 9 11 11"/><path d="M13 1C16 4 16 10 13 13" stroke="#789"/></svg>
    <svg width="14" height="14" fill="none" stroke="#d5dadd"><path d="M1 13A12 12 0 0 1 13 1" stroke="#7f8a90"/><path d="M4 13A9 9 0 0 1 13 4.500M7 13A6 6 0 0 1 13 7.500"/><circle cx="11.500" cy="11.500" r="1.600" fill="#fff"/></svg>
    <span>ESP</span>
    <time>12:35<br>26/04/2021</time>
    <svg width="16" height="16" fill="none" stroke="#fff" stroke-width="1.200"><path d="M1 1H15V12.500H10L8 15 6 12.500H1Z"/></svg>
  </div>
</footer>
</body>
</html>
```
FILE: styles.css
```css
* { box-sizing: border-box; }
body {
  margin: 0;
  height: 100vh;
  min-height: 700px;
  display: flex;
  flex-direction: column;
  overflow: hidden;
  background: #dfe2e4;
  font-family: "Liberation Sans", Arial, sans-serif;
  font-size: 11px;
  color: #333;
}
button { padding: 0; border: 0; background: none; font: inherit; color: inherit; display: flex; align-items: center; justify-content: center; }
h2, h3, p, ul { margin: 0; padding: 0; }
svg { display: block; flex: none; }
.defs { position: absolute; width: 0; height: 0; }
.caret { width: 6px; height: 5px; }

/* Window frame */
.window {
  flex: 1;
  min-height: 0;
  display: flex;
  flex-direction: column;
  margin: 0 1px 0 3px;
  border: 1px solid #9b9b9b;
  border-bottom: 2px solid #a8a8a8;
}
.titlebar { height: 30px; flex: none; display: flex; align-items: center; gap: 6px; padding-left: 9px; background: #fff; font-family: "Noto Sans", "Open Sans", sans-serif; font-size: 11px; color: #808080; }
.app-logo { width: 14px; height: 16px; }
.title { flex: 1; }
.win-buttons { display: flex; }
.win-buttons button { width: 46px; height: 28px; }
.main { flex: 1; min-height: 0; display: flex; }

/* Data panel */
.data-panel { width: 402px; flex: none; display: flex; flex-direction: column; background: #e6e6e6; border-right: 1px solid #8c8c8c; color: #5a5a5a; }
.hub { height: 32px; flex: none; display: flex; align-items: center; padding: 0 9px 0 8px; background: #cbcbcb; font-size: 14px; }
.hub-name { margin: 0 8px; }
.hub-tools { display: flex; gap: 16px; margin-left: auto; }
.panel-scroll { position: relative; flex: 1; min-height: 0; overflow: hidden; padding: 26px 37px 0 16px; }
.projects-head { display: flex; align-items: center; height: 28px; margin-bottom: 12px; gap: 11px; }
h2 { font-size: 12px; line-height: 16px; }
.new-project { margin-left: auto; width: 83px; height: 28px; border-radius: 2px; background: #6b96c7; color: #fff; font-size: 12px; font-weight: bold; }
.card { display: flex; gap: 10px; min-height: 68px; margin-bottom: 12px; padding: 8px; border-radius: 3px; background: #fff; font-size: 12px; line-height: 14px; }
.card h3 { font-size: 12px; line-height: 14px; }
.card p { margin-top: 9px; padding-right: 14px; }
.card a { color: #4a6c99; }
.thumb { width: 32px; height: 32px; background: #f4f4f4; }
.thumb.plain { background: none; }
.section { margin-top: -12px; padding: 26px 0 13px; }
.scroll-thumb { position: absolute; top: 26px; right: 12px; width: 8px; height: 66%; border-radius: 4px; background: #b8b8b8; }
.filter { flex: none; height: 35px; padding: 6px 13px 6px 16px; border-top: 1px solid #dcdcdc; }
.filter input { display: block; width: 100%; height: 22px; padding: 0 6px; border: 1px solid #dcdcdc; border-radius: 4px; background: #e8e8e8; font: bold 13px "Liberation Sans", Arial, sans-serif; }
.filter input::placeholder { color: #757575; }

/* Document tabs */
.workspace { flex: 1; min-width: 0; display: flex; flex-direction: column; }
.tabbar { height: 32px; flex: none; display: flex; align-items: flex-end; gap: 4px; background: #cbcbcb; color: #555; }
.quick { flex: none; height: 32px; width: 191px; display: flex; align-items: center; gap: 18px; padding: 0 0 2px 9px; }
.quick button { gap: 5px; }
.quick .off { color: #8c8c8c; }
.quick .caret { width: 8px; height: 6px; }
.doc-tab { flex: 1 1 0; min-width: 0; height: 28px; display: flex; align-items: center; padding: 1px 3px 0 0; border-radius: 4px 4px 0 0; background: #bababa; font-size: 12px; color: #666; }
.doc-tab > button { flex: none; width: 16px; height: 16px; }
.doc-name { flex: 1; min-width: 0; display: flex; align-items: center; justify-content: center; gap: 4px; padding-left: 5px; white-space: nowrap; }
.doc-tab.dim svg { opacity: .6; }
.doc-tab.active { background: #f1f1f1; color: #444; }
.add-tab { flex: none; width: 28px; height: 28px; border-radius: 4px 4px 0 0; background: #bababa; }
.status { flex: none; width: 193px; height: 32px; display: flex; align-items: center; gap: 17px; padding: 0 9px 0 8px; font-size: 12px; }
.status button { gap: 4px; }
.status .bell { margin-left: auto; }

/* Ribbon */
.ribbon { flex: none; height: 82px; display: flex; background: #f1f1f1; border-bottom: 1px solid #d2d2d2; font-size: 10px; }
.design { width: 111px; height: 62px; margin: 10px 9px 0 11px; gap: 6px; border: 2px solid #dcdcdc; border-radius: 5px; font-weight: bold; }
.ribbon-body { flex: 1; min-width: 0; }
.ribbon-tabs { display: flex; height: 24px; line-height: 24px; }
.ribbon-tabs a { padding: 0 23px; color: #333; text-decoration: none; }
.ribbon-tabs a:nth-child(1) { padding: 0 25px 0 19px; }
.ribbon-tabs a:nth-child(4) { padding-right: 35px; }
.ribbon-tabs .current { padding: 0 12px; background: #cfebf7; border-bottom: 3px solid #2196d3; color: #1487c4; font-weight: bold; }
.groups { display: flex; }
.group { display: flex; flex-direction: column; align-items: center; height: 57px; }
.group:not(.last):not(.finish) { margin-right: 5px; padding-right: 5px; border-right: 1px solid #d5d5d5; }
.tools { display: flex; height: 38px; }
.tools button { width: 43px; height: 38px; }
.tools svg { width: 38px; height: 38px; }
.tools.wide button { width: 67px; }
.tools .on svg { background: #0696d7; }
.group-label { gap: 4px; height: 20px; white-space: nowrap; }
.last .tools.wide button { width: 63px; }
.finish { width: 103px; height: 59px; margin: -2px 0 0 10px; padding-top: 2px; background: #cdebf7; }

/* Drawing area */
.canvas { position: relative; flex: 1; min-height: 0; overflow: hidden; background: #fff; }
.drawing { position: absolute; inset: 0; }
.ruler-text { font: 300 15px Roboto, sans-serif; fill: #777; }
.dim-text { font: 300 16px Roboto, sans-serif; fill: #222; }
.field { position: absolute; width: 73px; height: 22px; border: 1px solid #ccc; background: #fff; font: 11px "Liberation Sans", Arial, sans-serif; line-height: 20px; text-align: center; color: #333; }
.angle { left: 403px; top: 424px; }
.length { left: 431px; top: 598px; }
.field mark { padding: 1px 0; background: #0078d7; color: #fff; }
.hint { position: absolute; left: 434px; top: 562px; padding: 0 3px; border: 1px solid #666; background: #f2f2f2; font: 10px/14px "Noto Sans", sans-serif; color: #111; white-space: nowrap; }

.palette-bar { display: flex; align-items: center; height: 25px; border: 1px solid #c6c6c6; background: #f1f1f1; color: #555; }
.palette-bar h2 { flex: 1; font-size: 10px; font-weight: normal; }
.grip { width: 3px; height: 10px; border: solid #777; border-width: 0 1px; }
.browser { position: absolute; left: 4px; top: 4px; width: 300px; }
.browser .palette-bar { padding: 0 1px 0 4px; }
.browser h2 { margin-left: 10px; }
.browser .grip, .comments .grip { margin-left: 7px; }
.tree { display: flex; flex-direction: column; list-style: none; padding: 3px 0 0 36px; }
.tree li { display: flex; align-items: center; gap: 8px; height: 24px; }
.tree .root { margin-left: -20px; }
.node { display: flex; align-items: center; gap: 9px; height: 22px; padding: 0 11px 0 3px; background: #f1f1f1; }
.node em { margin-left: 5px; font-style: normal; white-space: nowrap; }
.root .node { gap: 5px; padding-right: 7px; }
.selected { display: flex; align-items: center; gap: 14px; width: 98px; height: 16px; padding-left: 3px; background: #969696; color: #fff; }
.comments { position: absolute; left: 4px; bottom: 4px; width: 300px; padding: 0 1px 0 24px; border-top: 0; }

.viewcube { position: absolute; right: 10px; top: 21px; }
.axis { font: bold 13px Roboto, sans-serif; }
.viewcube svg { overflow: visible; }
.z { fill: #8d8ae0; }
.x { fill: #f09090; }
.face { font: bold 13px Roboto, sans-serif; fill: #8f939b; }

.palette { position: absolute; right: 4px; top: 124px; width: 250px; border: 1px solid #c6c6c6; background: #f1f1f1; }
.palette .palette-bar { border: 0; border-bottom: 1px solid #c6c6c6; padding: 0 4px 0 1px; }
.palette .palette-bar button { margin: 0 4px 0 7px; }
.palette h3 { display: flex; align-items: center; gap: 5px; height: 29px; padding-left: 4px; font-size: 11px; color: #222; }
.palette h3 .caret { width: 9px; height: 7px; }
.option { display: grid; grid-template-columns: 153px auto; align-items: center; justify-content: start; height: 30px; padding-left: 12px; }
.pair { display: flex; gap: 13px; }
input[type="checkbox"] { appearance: none; width: 13px; height: 13px; margin: 0; border: 1px solid #666; border-radius: 3px; background: linear-gradient(#fafafa, #c9c9c9); }
input[type="checkbox"]:checked { background: linear-gradient(#b5b5b5, #ececec); }
input[type="checkbox"]:checked::after { content: ""; display: block; width: 4px; height: 8px; margin-left: 4px; border: solid #111; border-width: 0 2px 2px 0; transform: rotate(40deg); }
.palette footer { display: flex; justify-content: flex-end; height: 37px; padding: 9px 10px 0 0; border-top: 1px solid #c6c6c6; }
.palette footer button { width: 82px; height: 20px; border: 1px solid #b5b5b5; background: #e8e8e8; font-size: 12px; color: #666; }

.navbar { position: absolute; left: 50%; bottom: 4px; transform: translateX(-50%); display: flex; align-items: center; gap: 9px; height: 24px; padding: 0 5px 0 3px; background: #f1f1f1; }
.navbar button { gap: 3px; }

/* Timeline */
.timeline { flex: none; height: 50px; display: flex; align-items: center; gap: 11px; padding: 0 13px 0 10px; border-top: 2px solid #c9c9c9; background: #f1f1f1; }
.marker { margin-left: 9px; }
.gear { margin-left: auto; }

/* Taskbar */
.taskbar { flex: none; height: 40px; display: flex; background: linear-gradient(90deg, #22333d, #27343a 60%, #2a2d2e 77%, #1e2f38 82%, #1e2d36); color: #fff; font-family: "Open Sans", sans-serif; }
.start { width: 48px; }
.search { width: 344px; display: flex; align-items: center; gap: 11px; padding-left: 12px; background: #f1f1f1; }
.search input { flex: 1; min-width: 0; padding: 0; border: 0; background: none; font: 14px "Open Sans", sans-serif; }
.search input::placeholder { color: #444; }
.apps { display: flex; }
.apps button { width: 49px; height: 40px; }
.apps svg { width: 24px; height: 24px; }
.apps .run { background: linear-gradient(#76b9ed, #76b9ed) center bottom / 40px 2px no-repeat; }
.apps .current { background: linear-gradient(#76b9ed, #76b9ed) center bottom / 49px 2px no-repeat #505a61; }
.glyph { font: bold 11px "Open Sans", sans-serif; fill: #fff; text-anchor: middle; }
.ps { fill: #31c5f0; }
.tray { display: flex; align-items: center; gap: 11px; margin-left: auto; margin-right: 4px; padding-right: 20px; border-right: 1px solid #5d6970; }
.tray time { margin: 0 8px 0 4px; line-height: 18px; text-align: center; }
```
